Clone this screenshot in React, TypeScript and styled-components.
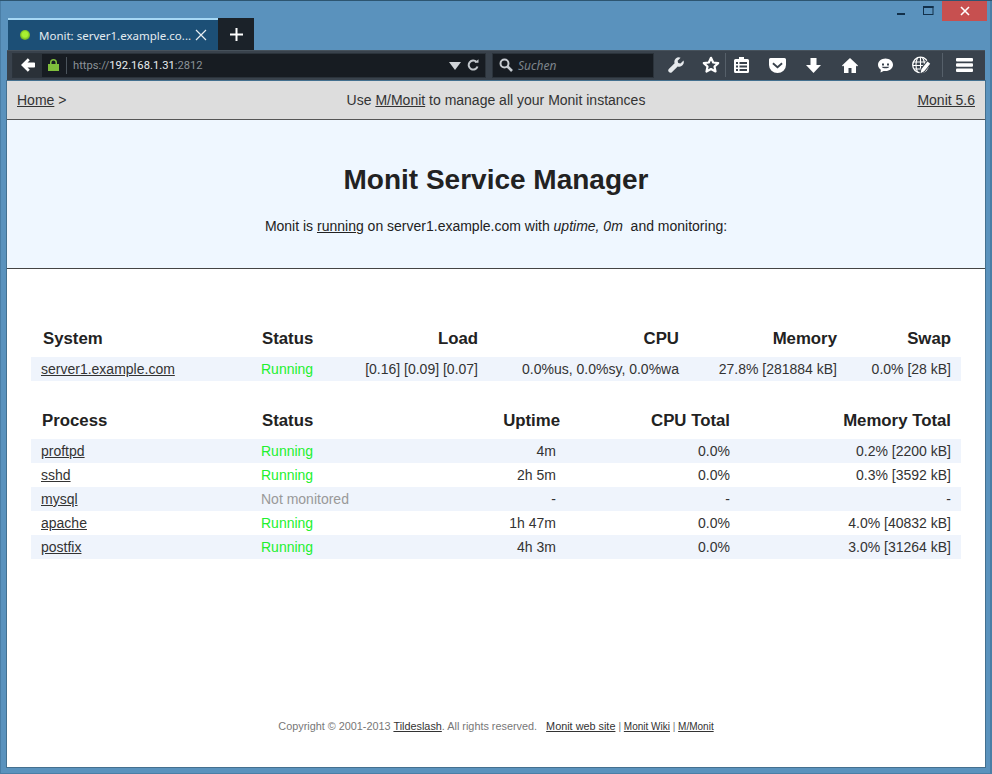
import React from "react";
import styled, { createGlobalStyle } from "styled-components";

const Global = createGlobalStyle`
  html, body { margin: 0; padding: 0; width: 992px; height: 774px; overflow: hidden; }
  body { font-family: "Liberation Sans", Arial, sans-serif; color: #222; }
  * { box-sizing: border-box; }
`;

const Frame = styled.div`
  width: 992px; height: 774px; display: flex; flex-direction: column;
  background: #5a92bd; border-top: 1px solid #2d5570; padding: 0 7px 7px 7px;
  box-shadow: inset 1px 0 0 #4a7ea6, inset -2px 0 0 #4a7ea6, inset 0 -1px 0 #4a7ea6;
`;
const TitleBar = styled.div`
  height: 17px; display: flex; justify-content: flex-end; align-items: flex-start; margin-right: -2px;
`;
const WinBtn = styled.div<{ $close?: boolean }>`
  width: ${p => (p.$close ? "45px" : "27px")}; height: 20px; display: flex; align-items: center; justify-content: center;
  background: ${p => (p.$close ? "#c75050" : "transparent")};
`;
const TabStrip = styled.div`
  height: 32px; display: flex; margin-left: 1px;
`;
const Tab = styled.div`
  width: 210px; height: 32px; background: #1c4f76; border-top: 2px solid #a6d8f5;
  display: flex; align-items: center; padding: 0 11px 0 12px; color: #e4ebf0; font: 11.5px "Noto Sans", "Open Sans", sans-serif;
`;
const Favicon = styled.span`
  width: 10px; height: 10px; border-radius: 50%; margin-right: 9px; flex: none;
  background: radial-gradient(circle at 50% 45%, #a8f030 35%, #5b9a22 80%, #3f6f2a 100%);
`;
const TabLabel = styled.span`flex: 1; white-space: nowrap; min-width: 0;`;
const NewTab = styled.div`
  width: 36px; height: 32px; background: #1b2229; display: flex; align-items: center; justify-content: center;
`;
const NavBar = styled.div`
  height: 31px; background: #39424c; border-top: 1px solid #47525c; display: flex; align-items: center;
  padding: 0 0 1px 5px; border-bottom: 1px solid #5a92bd;
`;
const UrlBox = styled.div`
  width: 474px; height: 25px; flex: none; background: #171c22; display: flex; align-items: center; margin-right: 6px;
  border: 1px solid #2b333b;
`;
const Back = styled.div`
  width: 29px; height: 23px; background: #2a3138; display: flex; align-items: center; justify-content: center; flex: none;
`;
const Lock = styled.div`
  width: 24px; height: 23px; display: flex; align-items: center; padding-left: 6px; flex: none;
`;
const UrlSep = styled.div`width: 1px; height: 17px; background: #4b545c; margin-right: 6px; flex: none;`;
const Url = styled.div`
  flex: 1; font: 11.2px Roboto, "Noto Sans", sans-serif; color: #8b9298;
  b { font-weight: 400; color: #e8ecef; }
`;
const UrlIcon = styled.span`display: flex; align-items: center; margin-right: 6px;`;
const SearchBox = styled.div`
  width: 162px; height: 25px; flex: none; background: #171c22; display: flex; align-items: center; padding-left: 6px; gap: 5px;
  color: #7d848b; font: italic 12px "Noto Sans", "Open Sans", sans-serif; border: 1px solid #2b333b;
`;
const Tools = styled.div`flex: 1; display: flex; align-items: center; height: 100%;`;
const Tool = styled.span<{ $w: number }>`
  width: ${p => p.$w}px; flex: none; display: flex; align-items: center; justify-content: center;
`;
const ToolSep = styled.span`width: 1px; height: 24px; background: #56606a; flex: none;`;

const Page = styled.div`
  flex: 1; background: #fff; display: flex; flex-direction: column; font-size: 14px; color: #222;
  box-shadow: 0 0 0 1px #44708f;
  a { color: inherit; text-decoration: underline; }
`;
const Breadcrumb = styled.div`
  height: 39px; flex: none; background: #dddddd; border-bottom: 1px solid #555;
  padding: 0 10px; display: grid; grid-template-columns: 1fr auto 1fr; align-items: center; color: #333;
`;
const BcRight = styled.div`text-align: right;`;
const Hero = styled.div`
  height: 149px; flex: none; background: #eff7ff; border-bottom: 1px solid #444; text-align: center; padding-top: 43px;
`;
const HeroTitle = styled.h1`margin: 0; font-size: 28px; line-height: 34px; font-weight: 700; color: #222;`;
const HeroText = styled.p`margin: 19px 0 0; line-height: 20px; color: #222;`;

const Content = styled.div`flex: 1; padding: 56px 24px 0; display: flex; flex-direction: column;`;
const Table = styled.table`
  width: 930px; table-layout: fixed; border-collapse: collapse; margin-bottom: 26px;
`;
const Th = styled.th<{ $right?: boolean; $pl?: number }>`
  height: 32px; padding: 0 10px 5px ${p => p.$pl ?? 11}px; font-size: 16.8px; font-weight: 700; color: #222;
  text-align: ${p => (p.$right ? "right" : "left")};
`;
const Td = styled.td<{ $right?: boolean; $pr?: number }>`
  height: 24px; padding: 0 ${p => p.$pr ?? 10}px 0 10px; white-space: nowrap; color: #333;
  text-align: ${p => (p.$right ? "right" : "left")};
`;
const Row = styled.tr<{ $stripe?: boolean }>`background: ${p => (p.$stripe ? "#eff4fc" : "transparent")};`;
const Status = styled(Td)<{ $off?: boolean }>`color: ${p => (p.$off ? "#999" : "#22f02e")};`;
const Footer = styled.div`
  margin-top: auto; height: 48px; text-align: center; font-size: 10.85px; color: #777; line-height: 14px;
  a { color: #333; }
`;
const FootSmall = styled.span`font-size: 10px;`;

const procs: [string, string, string, string, string][] = [
  ["proftpd", "Running", "4m", "0.0%", "0.2% [2200 kB]"],
  ["sshd", "Running", "2h 5m", "0.0%", "0.3% [3592 kB]"],
  ["mysql", "Not monitored", "-", "-", "-"],
  ["apache", "Running", "1h 47m", "0.0%", "4.0% [40832 kB]"],
  ["postfix", "Running", "4h 3m", "0.0%", "3.0% [31264 kB]"],
];

export default function App() {
  return (
    <>
      <Global />
      <Frame>
        <TitleBar>
          <WinBtn>
            <svg width="10" height="10" viewBox="0 0 10 10"><rect x="0" y="7" width="8" height="2" fill="#12304a" /></svg>
          </WinBtn>
          <WinBtn>
            <svg width="11" height="10" viewBox="0 0 11 10" fill="none"><rect x=".5" y=".5" width="9.5" height="8" stroke="#12304a" /><rect x="0" y="0" width="10.500" height="2" fill="#12304a" /></svg>
          </WinBtn>
          <WinBtn $close>
            <svg width="10" height="10" viewBox="0 0 10 10" stroke="#fff" strokeWidth="1.6"><path d="M1 1l8 8M9 1L1 9" /></svg>
          </WinBtn>
        </TitleBar>
        <TabStrip>
          <Tab>
            <Favicon />
            <TabLabel>Monit: server1.example.co...</TabLabel>
            <svg width="12" height="12" viewBox="0 0 12 12" stroke="#e8eef2" strokeWidth="1.2"><path d="M1 1l10 10M11 1L1 11" /></svg>
          </Tab>
          <NewTab>
            <svg width="13" height="13" viewBox="0 0 13 13" fill="#fff"><path d="M5.500 0h2v5.500H13v2H7.500V13h-2V7.500H0v-2h5.500z" /></svg>
          </NewTab>
        </TabStrip>
        <NavBar>
          <UrlBox>
            <Back>
              <svg width="14" height="14" viewBox="0 0 14 14" fill="#fff"><path d="M6.800 0.300L8.800 2.300 6.500 4.500H13.200a.8.8 0 0 1 .8.800v3.400a.8.8 0 0 1-.8.800H6.500l2.300 2.200-2 2L0 7z" /></svg>
            </Back>
            <Lock>
              <svg width="11" height="12" viewBox="0 0 11 12"><path d="M2 5V3.500a3.500 3.500 0 017 0V5h2v7H0V5zM3.500 5h4V3.500a2 2 0 00-4 0z" fill="#7fbe3c" fillRule="evenodd" /></svg>
            </Lock>
            <UrlSep />
            <Url>https://<b>192.168.1.31</b>:2812</Url>
            <UrlIcon>
              <svg width="12" height="9" viewBox="0 0 12 9" fill="#d0d4d8"><path d="M0 1h12L6 9z" /></svg>
            </UrlIcon>
            <UrlIcon>
              <svg width="12" height="12" viewBox="0 0 12 12" fill="none" stroke="#c2c7cc" strokeWidth="2"><path d="M10.500 7.500A4.500 4.500 0 1 1 9.500 3" /><path d="M7.500 3.800h4v-3.500z" fill="#c2c7cc" stroke="none" /></svg>
            </UrlIcon>
          </UrlBox>
          <SearchBox>
            <svg width="14" height="14" viewBox="0 0 14 14" fill="none" stroke="#c6cbd0" strokeWidth="2"><circle cx="5.500" cy="5.500" r="4" /><path d="M8.500 8.500l4.500 4.500" strokeWidth="2.600" /></svg>
            Suchen
          </SearchBox>
          <Tools>
            <Tool $w={43}>
              <svg width="16" height="16" viewBox="0 0 16 16" fill="#e6e9ec"><path d="M15.500 3.600l-3 3-2.300-.6-.6-2.300 3-3A4.500 4.500 0 0 0 6.600 6.300L.8 12.100a2.200 2.200 0 0 0 3.100 3.100l5.800-5.800a4.500 4.500 0 0 0 5.800-5.800z" /></svg>
            </Tool>
            <Tool $w={28}>
              <svg width="18" height="18" viewBox="0 0 18 18" fill="none" stroke="#fff" strokeWidth="2.200" strokeLinejoin="round"><path d="M9 1.800l2.200 4.700 5 .6-3.700 3.400 1 5-4.500-2.500-4.500 2.500 1-5L1.800 7.100l5-.6z" /></svg>
            </Tool>
            <ToolSep />
            <Tool $w={30}>
              <svg width="15" height="16" viewBox="0 0 15 16" fill="#fff"><path fillRule="evenodd" d="M5 0h5v2h3.500A1.500 1.500 0 0 1 15 3.500v11a1.500 1.500 0 0 1-1.500 1.500h-12A1.500 1.500 0 0 1 0 14.500v-11A1.500 1.500 0 0 1 1.500 2H5zM2 5v2h2V5zm3.500 0v2H13V5zM2 8.500v2h2v-2zm3.500 0v2H13v-2zM2 12v2h2v-2zm3.500 0v2H13v-2z" /></svg>
            </Tool>
            <Tool $w={43}>
              <svg width="17" height="15" viewBox="0 0 17 15" fill="#fff"><path fillRule="evenodd" d="M1.500 0h14A1.500 1.500 0 0 1 17 1.500V7a8.500 8 0 0 1-17 0V1.500A1.500 1.500 0 0 1 1.500 0zm3 4.500L3.300 6l5.200 4.500L13.700 6l-1.200-1.500-4 3.500z" /></svg>
            </Tool>
            <Tool $w={29}>
              <svg width="15" height="15" viewBox="0 0 15 15" fill="#fff"><path d="M4.500 0h6v7H15l-7.500 8L0 7h4.500z" /></svg>
            </Tool>
            <Tool $w={43}>
              <svg width="16" height="15" viewBox="0 0 16 15" fill="#fff"><path fillRule="evenodd" d="M8 0l8 7.500-1 1-1-.9V15H9.500v-5h-3v5H2V7.600l-1 .9-1-1z" /></svg>
            </Tool>
            <Tool $w={29}>
              <svg width="15" height="15" viewBox="0 0 15 15" fill="#fff"><path fillRule="evenodd" d="M7.500 0.500c4.100 0 7.500 2.800 7.500 6.300s-3.400 6.300-7.500 6.300c-.7 0-1.300-.1-1.900-.2L2.500 14.500l.4-2.800C1.100 10.500 0 8.800 0 6.800 0 3.300 3.400.5 7.500.5zM4 5.500v2h2v-2zm5 0v2h2v-2zM3.700 8.700c1 2 6.600 2 7.600 0z" /></svg>
            </Tool>
            <Tool $w={42}>
              <svg width="18" height="18" viewBox="0 0 18 18" fill="none" stroke="#fff" strokeWidth="1.100" overflow="visible">
                <circle cx="8.500" cy="9" r="7.800" strokeWidth="1.300" />
                <path d="M1 6h15M1 9.500h15M2 13h9M5.500 2c-2 3.500-2 10 0 14M10.500 1.700c2 3 2.200 6 1.800 9M8.500 1.200V16" />
                <path d="M8.500 17.200l1-4.200 6-7.500 2.700 2.200-6 7.500z" fill="#fff" stroke="#39424c" strokeWidth="2" paintOrder="stroke" />
              </svg>
            </Tool>
            <ToolSep />
            <Tool $w={42}>
              <svg width="17" height="14" viewBox="0 0 17 14" fill="#fff"><rect width="17" height="3.400" rx="1" /><rect y="5.300" width="17" height="3.400" rx="1" /><rect y="10.600" width="17" height="3.400" rx="1" /></svg>
            </Tool>
          </Tools>
        </NavBar>
        <Page>
          <Breadcrumb>
            <div><a>Home</a> &gt;</div>
            <div>Use <a>M/Monit</a> to manage all your Monit instances</div>
            <BcRight><a>Monit 5.6</a></BcRight>
          </Breadcrumb>
          <Hero>
            <HeroTitle>Monit Service Manager</HeroTitle>
            <HeroText>Monit is <a>running</a> on server1.example.com with <i>uptime, 0m</i> &nbsp;and monitoring:</HeroText>
          </Hero>
          <Content>
            <Table>
              <colgroup>
                <col width={220} /><col width={90} /><col width={147} /><col width={201} /><col width={158} /><col width={114} />
              </colgroup>
              <thead>
                <tr>
                  <Th $pl={12}>System</Th><Th>Status</Th><Th $right>Load</Th><Th $right>CPU</Th><Th $right>Memory</Th><Th $right>Swap</Th>
                </tr>
              </thead>
              <tbody>
                <Row $stripe>
                  <Td><a>server1.example.com</a></Td>
                  <Status>Running</Status>
                  <Td $right>[0.16] [0.09] [0.07]</Td>
                  <Td $right>0.0%us, 0.0%sy, 0.0%wa</Td>
                  <Td $right>27.8% [281884 kB]</Td>
                  <Td $right>0.0% [28 kB]</Td>
                </Row>
              </tbody>
            </Table>
            <Table>
              <colgroup>
                <col width={220} /><col width={150} /><col width={169} /><col width={170} /><col width={221} />
              </colgroup>
              <thead>
                <tr>
                  <Th>Process</Th><Th>Status</Th><Th $right>Uptime</Th><Th $right>CPU Total</Th><Th $right>Memory Total</Th>
                </tr>
              </thead>
              <tbody>
                {procs.map((p, i) => (
                  <Row key={p[0]} $stripe={i % 2 === 0}>
                    <Td><a>{p[0]}</a></Td>
                    <Status $off={p[1] !== "Running"}>{p[1]}</Status>
                    <Td $right $pr={14}>{p[2]}</Td>
                    <Td $right>{p[3]}</Td>
                    <Td $right>{p[4]}</Td>
                  </Row>
                ))}
              </tbody>
            </Table>
            <Footer>
              Copyright © 2001-2013 <a>Tildeslash</a>. All rights reserved. &nbsp; <a>Monit web site</a> <FootSmall>| <a>Monit Wiki</a> | <a>M/Monit</a></FootSmall>
            </Footer>
          </Content>
        </Page>
      </Frame>
    </>
  );
}
